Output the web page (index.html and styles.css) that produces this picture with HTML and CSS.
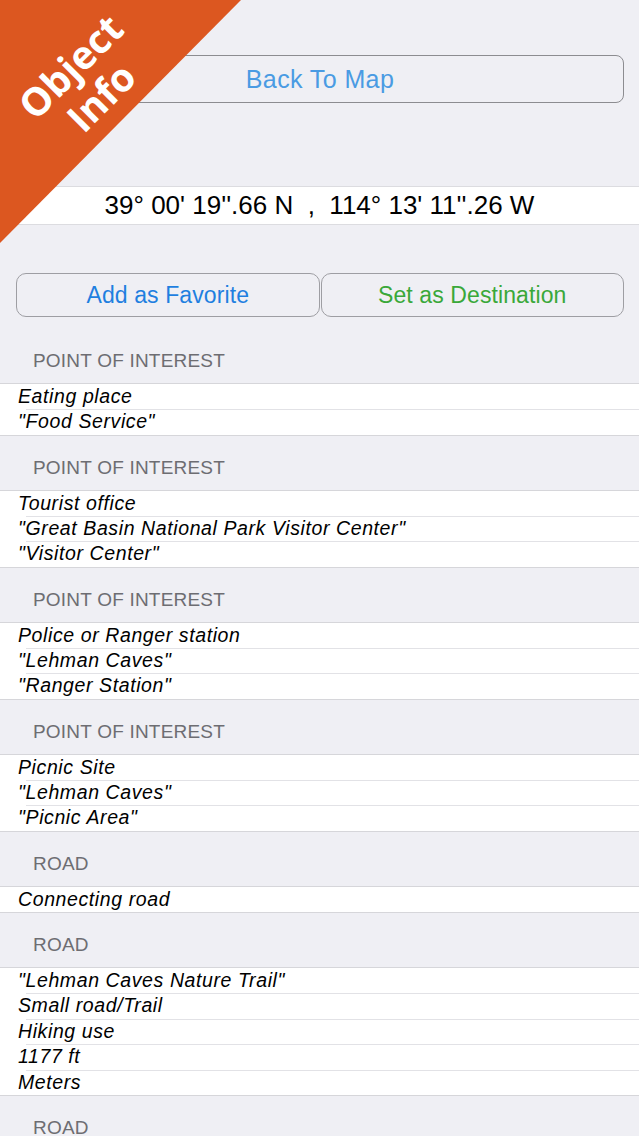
FILE: index.html
```html
<!DOCTYPE html>
<html>
<head>
<meta charset="utf-8">
<link rel="stylesheet" href="styles.css">
</head>
<body>
<div class="page">
  <div class="back-wrap"><div class="btn back">Back To Map</div></div>
  <div class="coord">39° 00' 19''.66 N &nbsp;, &nbsp;114° 13' 11''.26 W</div>
  <div class="actions">
    <div class="btn act fav">Add as Favorite</div>
    <div class="btn act dest">Set as Destination</div>
  </div>

  <div class="head first">POINT OF INTEREST</div>
  <div class="group">
    <div class="row">Eating place</div>
    <div class="row">"Food Service"</div>
  </div>

  <div class="head">POINT OF INTEREST</div>
  <div class="group">
    <div class="row">Tourist office</div>
    <div class="row">"Great Basin National Park Visitor Center"</div>
    <div class="row">"Visitor Center"</div>
  </div>

  <div class="head">POINT OF INTEREST</div>
  <div class="group">
    <div class="row">Police or Ranger station</div>
    <div class="row">"Lehman Caves"</div>
    <div class="row">"Ranger Station"</div>
  </div>

  <div class="head">POINT OF INTEREST</div>
  <div class="group">
    <div class="row">Picnic Site</div>
    <div class="row">"Lehman Caves"</div>
    <div class="row">"Picnic Area"</div>
  </div>

  <div class="head">ROAD</div>
  <div class="group">
    <div class="row">Connecting road</div>
  </div>

  <div class="head">ROAD</div>
  <div class="group">
    <div class="row">"Lehman Caves Nature Trail"</div>
    <div class="row">Small road/Trail</div>
    <div class="row">Hiking use</div>
    <div class="row">1177 ft</div>
    <div class="row">Meters</div>
  </div>

  <div class="head">ROAD</div>
</div>

<div class="banner">
  <svg class="tri" width="242" height="244" viewBox="0 0 242 244"><polygon points="0,0 241,0 0,243" fill="#dc5720"/></svg>
  <div class="banner-text">Object<br>Info</div>
</div>
</body>
</html>
```

FILE: styles.css
```css
html, body {
  margin: 0;
  padding: 0;
  background: #efeff4;
}
body {
  font-family: "Liberation Sans", Arial, sans-serif;
  overflow: hidden;
}
.page {
  width: 639px;
  height: 1136px;
  overflow: hidden;
}
.back-wrap {
  padding: 55px 15px 0 16px;
}
.btn {
  box-sizing: border-box;
  display: flex;
  align-items: center;
  justify-content: center;
}
.back {
  height: 48px;
  border: 1.5px solid #8c8c90;
  border-radius: 8px;
  color: #4a9be3;
  font-size: 25px;
  letter-spacing: 0.4px;
}
.coord {
  margin-top: 83px;
  height: 39px;
  box-sizing: border-box;
  background: #fff;
  border-top: 1px solid #dcdce0;
  border-bottom: 1px solid #dcdce0;
  display: flex;
  align-items: center;
  justify-content: center;
  font-size: 26px;
  color: #000;
  white-space: pre;
}
.actions {
  margin-top: 48px;
  padding: 0 15px 0 16px;
  display: flex;
  gap: 1px;
}
.act {
  flex: 1;
  height: 44px;
  border: 1px solid #9e9ea3;
  border-radius: 10px;
  font-size: 23px;
  letter-spacing: 0.1px;
}
.fav { color: #1f7fe0; }
.dest { color: #3aa83a; }
.head {
  box-sizing: border-box;
  height: 56px;
  padding: 0 0 12px 33px;
  display: flex;
  align-items: flex-end;
  font-size: 19px;
  letter-spacing: 0.2px;
  color: #6d6d72;
}
.head.first {
  margin-top: 11px;
}
.group {
  background: #fff;
  box-shadow: 0 -1px 0 #d6d6da, 0 1px 0 #d6d6da;
}
.row {
  position: relative;
  box-sizing: border-box;
  height: 25.35px;
  padding-left: 18px;
  font-style: italic;
  font-size: 19.5px;
  letter-spacing: 0.6px;
  line-height: 25px;
  color: #000;
  white-space: nowrap;
}
.row + .row::before {
  content: "";
  position: absolute;
  left: 26px;
  right: 0;
  top: 0;
  height: 1px;
  background: #e2e2e6;
}
.banner {
  position: absolute;
  left: 0;
  top: 0;
  width: 242px;
  height: 244px;
  pointer-events: none;
}
.tri {
  position: absolute;
  left: 0;
  top: 0;
}
.banner-text {
  position: absolute;
  left: 85px;
  top: 81px;
  transform: translate(-50%, -50%) rotate(-45deg);
  color: #fff;
  font-family: "Open Sans", "Liberation Sans", sans-serif;
  font-weight: 700;
  font-size: 39px;
  line-height: 43px;
  text-align: center;
  white-space: nowrap;
}
```
